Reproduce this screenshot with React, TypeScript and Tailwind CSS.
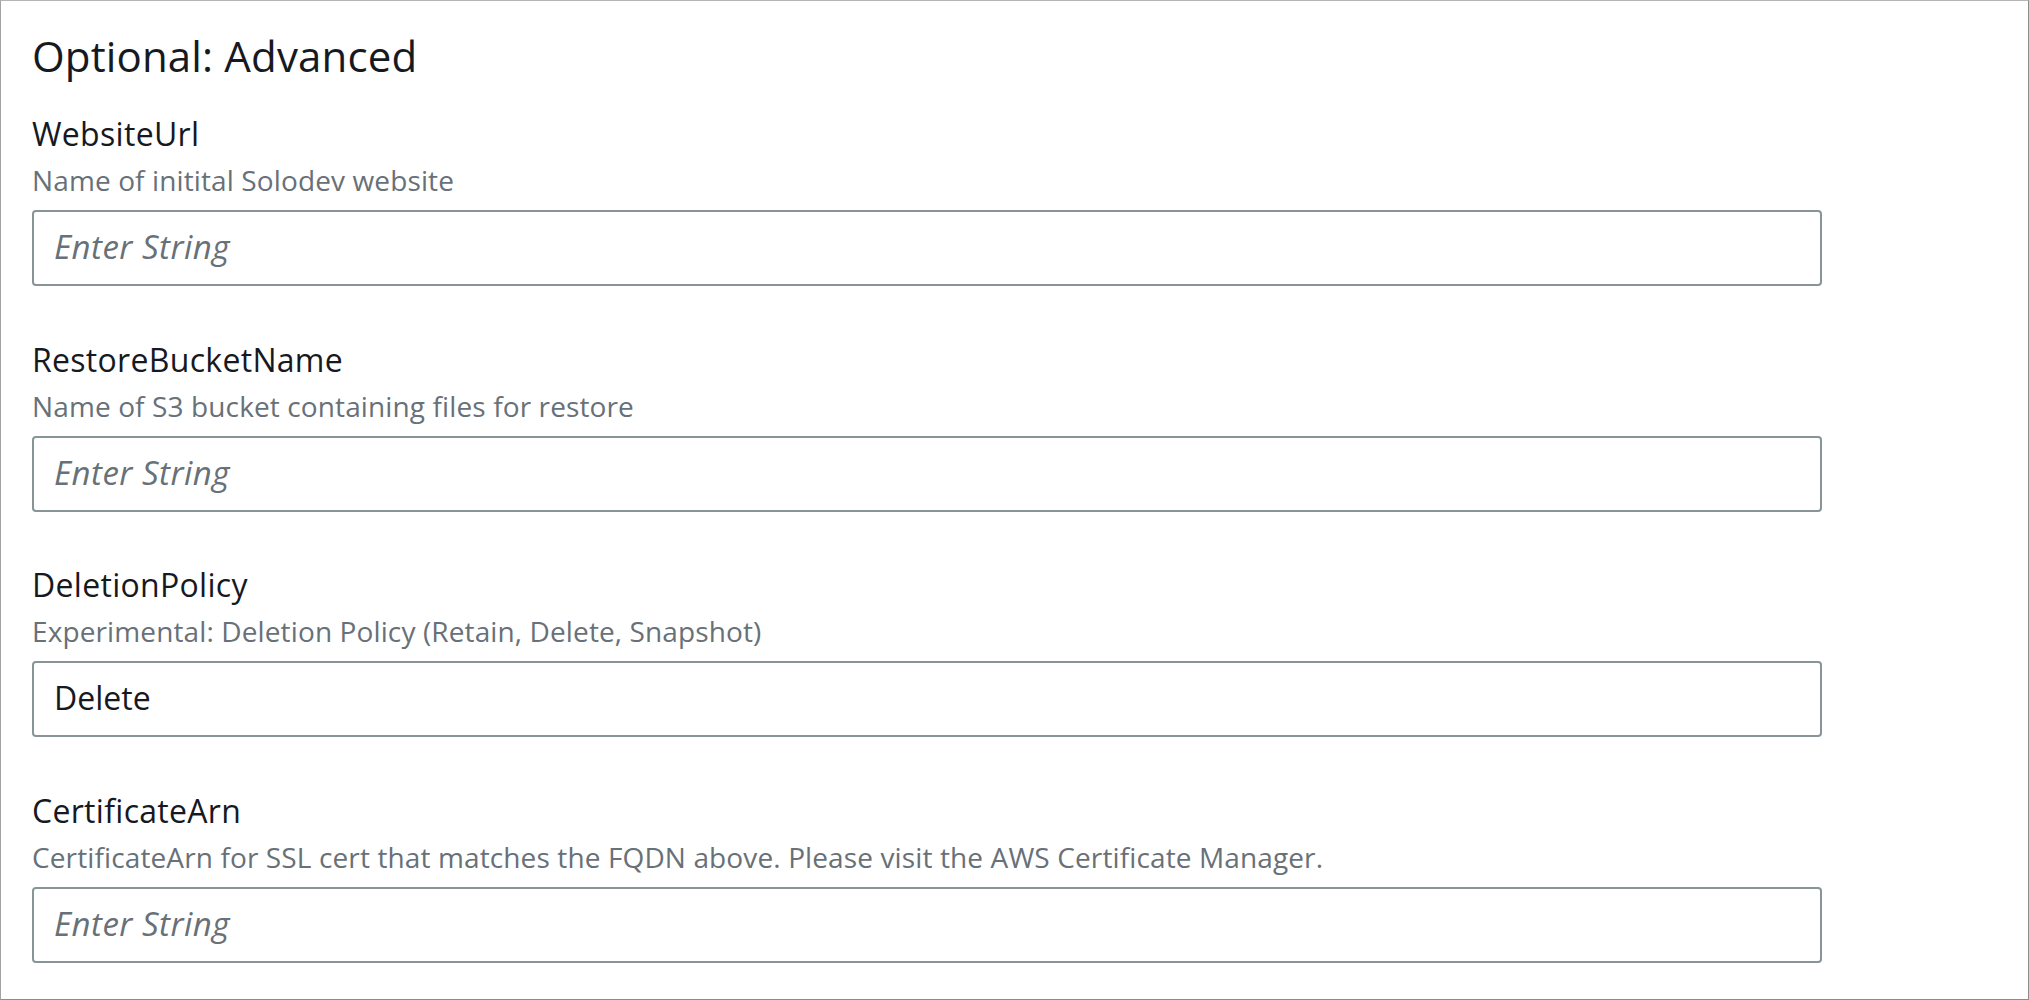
import React from "react";

type Field = {
  name: string;
  hint: string;
  value?: string;
};

const fields: Field[] = [
  { name: "WebsiteUrl", hint: "Name of initital Solodev website" },
  { name: "RestoreBucketName", hint: "Name of S3 bucket containing files for restore" },
  {
    name: "DeletionPolicy",
    hint: "Experimental: Deletion Policy (Retain, Delete, Snapshot)",
    value: "Delete",
  },
  {
    name: "CertificateArn",
    hint: "CertificateArn for SSL cert that matches the FQDN above. Please visit the AWS Certificate Manager.",
  },
];

const ParamField = ({ field }: { field: Field }) => {
  return (
    <div className="flex flex-col">
      <label className="text-[32px] leading-[40px] tracking-[0.3px] text-[#16191f]">{field.name}</label>
      <p className="mt-[8px] text-[28px] leading-[36px] tracking-[0.12px] text-[#687078]">{field.hint}</p>
      <input
        className="mt-[12px] h-[76px] w-[1790px] rounded-[4px] border-2 border-[#879596] bg-white px-[20px] pb-[3px] text-[32px] text-[#16191f] outline-none placeholder:text-[33px] placeholder:italic placeholder:tracking-[0.5px] placeholder:text-[#687078]"
        placeholder="Enter String"
        defaultValue={field.value}
      />
    </div>
  );
};

export default function App() {
  return (
    <div
      className="h-[1000px] w-[2029px] overflow-hidden border border-t-[#b5b5b5] border-l-[#a3a3a3] border-r-[#8c8c8c] border-b-[#8c8c8c] bg-white pl-[31px] pt-[27px]"
      style={{ fontFamily: '"Open Sans", "Noto Sans", sans-serif' }}
    >
      <h2 className="text-[42px] leading-[56px] tracking-[0.15px] text-[#16191f]">Optional: Advanced</h2>
      <div className="mt-[30px] flex flex-col gap-y-[53.5px]">
        {fields.map((f) => (
          <ParamField key={f.name} field={f} />
        ))}
      </div>
    </div>
  );
}
